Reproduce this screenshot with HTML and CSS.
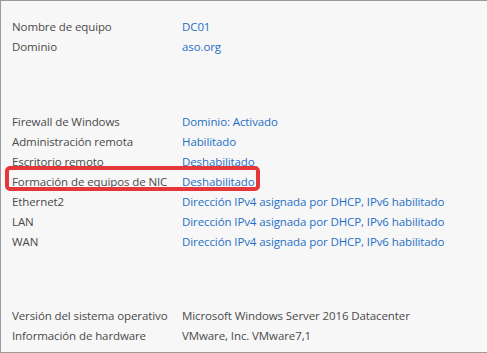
FILE: index.html
```html
<!DOCTYPE html>
<html lang="es">
<head>
    <meta charset="UTF-8">
    <title>Propiedades del servidor</title>
    <link rel="stylesheet" href="styles.css">
</head>
<body>
    <div class="panel">
        <div class="group group-first">
            <div class="row"><span class="label">Nombre de equipo</span><span class="value">DC01</span></div>
            <div class="row"><span class="label">Dominio</span><span class="value">aso.org</span></div>
        </div>

        <div class="group group-mid">
            <div class="row"><span class="label">Firewall de Windows</span><span class="value">Dominio: Activado</span></div>
            <div class="row"><span class="label">Administración remota</span><span class="value">Habilitado</span></div>
            <div class="row"><span class="label">Escritorio remoto</span><span class="value">Deshabilitado</span></div>
            <div class="row highlight"><span class="label">Formación de equipos de NIC</span><span class="value">Deshabilitado</span></div>
            <div class="row"><span class="label">Ethernet2</span><span class="value">Dirección IPv4 asignada por DHCP, IPv6 habilitado</span></div>
            <div class="row"><span class="label">LAN</span><span class="value">Dirección IPv4 asignada por DHCP, IPv6 habilitado</span></div>
            <div class="row"><span class="label">WAN</span><span class="value">Dirección IPv4 asignada por DHCP, IPv6 habilitado</span></div>
        </div>

        <div class="group group-last">
            <div class="row"><span class="label">Versión del sistema operativo</span><span class="value plain">Microsoft Windows Server 2016 Datacenter</span></div>
            <div class="row"><span class="label">Información de hardware</span><span class="value plain">VMware, Inc. VMware7,1</span></div>
        </div>
    </div>
</body>
</html>
```

FILE: styles.css
```css
body {
    margin: 0;
    font-family: "Open Sans", "Noto Sans", sans-serif;
    font-size: 11.5px;
    letter-spacing: -0.1px;
    color: #4a4a4a;
    background-color: #f7f7f7;
}
.panel {
    box-sizing: border-box;
    height: 353px;
    border-top: 1px solid #9a9a9a;
    border-left: 1px solid #9a9a9a;
    border-bottom: 1px solid #9a9a9a;
    background-color: #f7f7f7;
    padding: 16px 0 0 11px;
}
.group-mid {
    margin-top: 55px;
}
.group-last {
    margin-top: 54px;
}
.row {
    display: grid;
    grid-template-columns: 170px auto;
    height: 20px;
    line-height: 20px;
    white-space: nowrap;
}
.value {
    color: #1f6fc6;
}
.value.plain {
    color: #4a4a4a;
}
.highlight {
    position: relative;
}
.highlight::after {
    content: "";
    position: absolute;
    left: -7px;
    top: -6px;
    width: 247px;
    height: 17px;
    border: 4px solid #e5373a;
    border-radius: 5px;
}
```
